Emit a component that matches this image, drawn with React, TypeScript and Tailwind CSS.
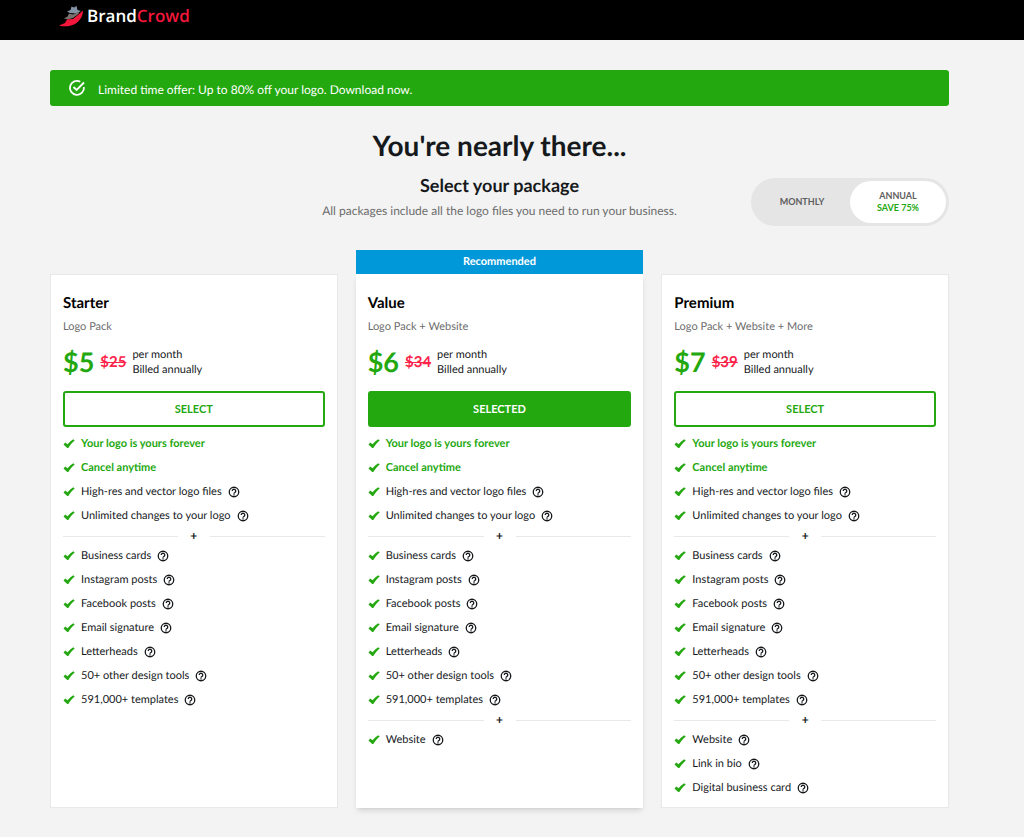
import React, { useState } from "react";

interface Feature {
  label: string;
  highlight?: boolean;
}

interface Plan {
  id: string;
  name: string;
  subtitle: string;
  price: string;
  oldPrice: string;
  recommended?: boolean;
  groups: Feature[][];
}

const baseFeatures: Feature[] = [
  { label: "Your logo is yours forever", highlight: true },
  { label: "Cancel anytime", highlight: true },
  { label: "High-res and vector logo files" },
  { label: "Unlimited changes to your logo" },
];

const designFeatures: Feature[] = [
  { label: "Business cards" },
  { label: "Instagram posts" },
  { label: "Facebook posts" },
  { label: "Email signature" },
  { label: "Letterheads" },
  { label: "50+ other design tools" },
  { label: "591,000+ templates" },
];

const plans: Plan[] = [
  {
    id: "starter",
    name: "Starter",
    subtitle: "Logo Pack",
    price: "$5",
    oldPrice: "$25",
    groups: [baseFeatures, designFeatures],
  },
  {
    id: "value",
    name: "Value",
    subtitle: "Logo Pack + Website",
    price: "$6",
    oldPrice: "$34",
    recommended: true,
    groups: [baseFeatures, designFeatures, [{ label: "Website" }]],
  },
  {
    id: "premium",
    name: "Premium",
    subtitle: "Logo Pack + Website + More",
    price: "$7",
    oldPrice: "$39",
    groups: [
      baseFeatures,
      designFeatures,
      [
        { label: "Website" },
        { label: "Link in bio" },
        { label: "Digital business card" },
      ],
    ],
  },
];

const Logo: React.FC = () => (
  <a href="#" aria-label="BrandCrowd" className="flex items-center gap-[3px]">
    <svg viewBox="0 0 26 24" className="h-6 w-[26px]" aria-hidden="true">
      <path d="M9 7.500 12.500 6 13.500 2.500 16 3.500 18.500 2 19.500 6 23 7 18.500 9.500 12 9Z" fill="#8393a5" />
      <path d="M6 14.500 9.500 12.500 11 9.500 15 10.500 21 7.500 20.500 10 15 14 10 15.500Z" fill="#78706e" />
      <path d="M1 21.500 7 19 9 15.500 15 15 20 11 25 6.500C25 12 22 17 17 20 12 22.500 6 23 1 21.500Z" fill="#f5163b" />
    </svg>
    <span className="font-['Open_Sans',sans-serif] text-[17px] leading-6 font-semibold text-white">
      Brand<span className="text-[#f5163b]">Crowd</span>
    </span>
  </a>
);

const CheckIcon: React.FC = () => (
  <svg viewBox="0 0 12 12" className="mr-1.5 h-3 w-3 shrink-0" aria-hidden="true">
    <path
      d="M.5 6.400 2.300 4.600 4.500 6.200C6.200 4.300 8 2.600 10.200 1.200L11.700 2.600C9.400 4.700 7.300 7 5.300 10H4.200Z"
      fill="#24a810"
    />
  </svg>
);

const HelpIcon: React.FC = () => (
  <svg
    viewBox="0 0 24 24"
    className="h-3 w-3"
    fill="none"
    stroke="currentColor"
    strokeWidth="2.600"
    aria-hidden="true"
  >
    <circle cx="12" cy="12" r="9.500" />
    <path d="M8.500 10a3.500 3.500 0 1 1 5.300 3C12.600 13.700 12 14.200 12 15.300" />
    <path d="M12 16.500v2.500" />
  </svg>
);

// Open circle with a tick through the gap
const OfferIcon: React.FC = () => (
  <svg
    viewBox="0 0 18 18"
    className="h-[18px] w-[18px]"
    fill="none"
    stroke="currentColor"
    strokeWidth="1.800"
    aria-hidden="true"
  >
    <path d="M12.300 2.700A7 7 0 1 0 15.900 8" />
    <path d="M5.500 8 8.600 11 16 3.500" />
  </svg>
);

const Divider: React.FC = () => (
  <div className="flex h-4 items-center gap-3">
    <span className="h-px flex-1 bg-[#e8e8e8]"></span>
    <span className="w-2 text-center text-xs leading-4 font-bold">+</span>
    <span className="h-px flex-1 bg-[#e8e8e8]"></span>
  </div>
);

const FeatureRow: React.FC<{ feature: Feature }> = ({ feature }) => (
  <li className="flex h-6 items-center">
    <CheckIcon />
    {feature.highlight ? (
      <span className="font-bold text-[#24a810]">{feature.label}</span>
    ) : (
      <>
        <span>{feature.label}</span>
        <button
          type="button"
          aria-label={`About ${feature.label}`}
          className="ml-1.5 cursor-pointer"
        >
          <HelpIcon />
        </button>
      </>
    )}
  </li>
);

interface PlanCardProps {
  plan: Plan;
  selected: boolean;
  onSelect: () => void;
}

const PlanCard: React.FC<PlanCardProps> = ({ plan, selected, onSelect }) => (
  <section className="flex flex-col">
    <div
      className={
        plan.recommended
          ? "h-6 bg-[#0098d9] text-center text-[11px] leading-6 font-bold text-white"
          : "h-6"
      }
    >
      {plan.recommended && "Recommended"}
    </div>
    <div
      className={`flex-1 bg-white px-3 pt-[18px] pb-[7px] ${
        plan.recommended ? "border-y border-white shadow-md" : "border border-[#e8e8e8]"
      }`}
    >
      <h3 className="text-[15px] leading-5 font-bold text-black">{plan.name}</h3>
      <p className="mt-1 text-[11px] leading-5 text-[#6d6d6d]">{plan.subtitle}</p>
      <div className="mt-[7px] flex h-9 items-center">
        <span className="text-[27px] leading-9 font-bold text-[#24a810]">{plan.price}</span>
        <del className="ml-1.5 text-[15px] leading-5 font-bold text-[#fb2349]">
          {plan.oldPrice}
        </del>
        <p className="ml-1.5 text-[11px] leading-[15px]">
          per month
          <br />
          Billed annually
        </p>
      </div>
      <button
        type="button"
        aria-pressed={selected}
        onClick={onSelect}
        className={`mt-[11px] mb-[5px] h-9 w-full cursor-pointer rounded-[3px] border-2 border-[#24a810] text-[11px] font-bold ${
          selected ? "bg-[#24a810] text-white" : "bg-white text-[#24a810]"
        }`}
      >
        {selected ? "SELECTED" : "SELECT"}
      </button>
      {plan.groups.map((group, index) => (
        <React.Fragment key={index}>
          {index > 0 && <Divider />}
          <ul className="text-[11px]">
            {group.map((feature) => (
              <FeatureRow key={feature.label} feature={feature} />
            ))}
          </ul>
        </React.Fragment>
      ))}
    </div>
  </section>
);

const App: React.FC = () => {
  const [selectedPlan, setSelectedPlan] = useState<string>("value");
  const [billing, setBilling] = useState<"monthly" | "annual">("annual");

  return (
    <div className="min-h-screen bg-[#f3f3f3] font-[Lato,sans-serif] text-[#16191c] [text-rendering:geometricPrecision]">
      <header className="flex h-10 items-start bg-black pt-1 pl-[58px]">
        <Logo />
      </header>

      <main className="pt-[30px] pr-[75px] pb-[29px] pl-[50px]">
        <div className="flex h-9 items-center rounded-[3px] bg-[#24a810] px-[18px] text-white">
          <OfferIcon />
          <p className="ml-3 pt-1 text-xs">
            Limited time offer: Up to 80% off your logo. Download now.
          </p>
        </div>

        <h1 className="mt-[19px] text-center text-[28px] leading-10 font-bold">
          You're nearly there...
        </h1>

        <div className="mt-2 grid grid-cols-[1fr_auto_1fr] items-start">
          <div className="col-start-2 text-center">
            <h2 className="text-lg leading-6 font-bold">Select your package</h2>
            <p className="mt-1 text-xs leading-5 text-[#6d6d6d]">
              All packages include all the logo files you need to run your business.
            </p>
          </div>
          {/* Billing period toggle */}
          <div className="mt-[5px] flex h-12 w-[198px] justify-self-end rounded-full bg-[#e5e5e5] p-[3px] text-[9px] leading-3 font-bold text-[#5e5e5e]">
            <button
              type="button"
              aria-pressed={billing === "monthly"}
              onClick={() => setBilling("monthly")}
              className={`flex-1 cursor-pointer rounded-full ${
                billing === "monthly" ? "bg-white" : ""
              }`}
            >
              MONTHLY
            </button>
            <button
              type="button"
              aria-pressed={billing === "annual"}
              onClick={() => setBilling("annual")}
              className={`flex-1 cursor-pointer rounded-full ${
                billing === "annual" ? "bg-white" : ""
              }`}
            >
              ANNUAL
              <br />
              <span className="text-[#24a810]">SAVE 75%</span>
            </button>
          </div>
        </div>

        <div className="mt-6 grid grid-cols-3 gap-[18px]">
          {plans.map((plan) => (
            <PlanCard
              key={plan.id}
              plan={plan}
              selected={selectedPlan === plan.id}
              onSelect={() => setSelectedPlan(plan.id)}
            />
          ))}
        </div>
      </main>
    </div>
  );
};

export default App;
